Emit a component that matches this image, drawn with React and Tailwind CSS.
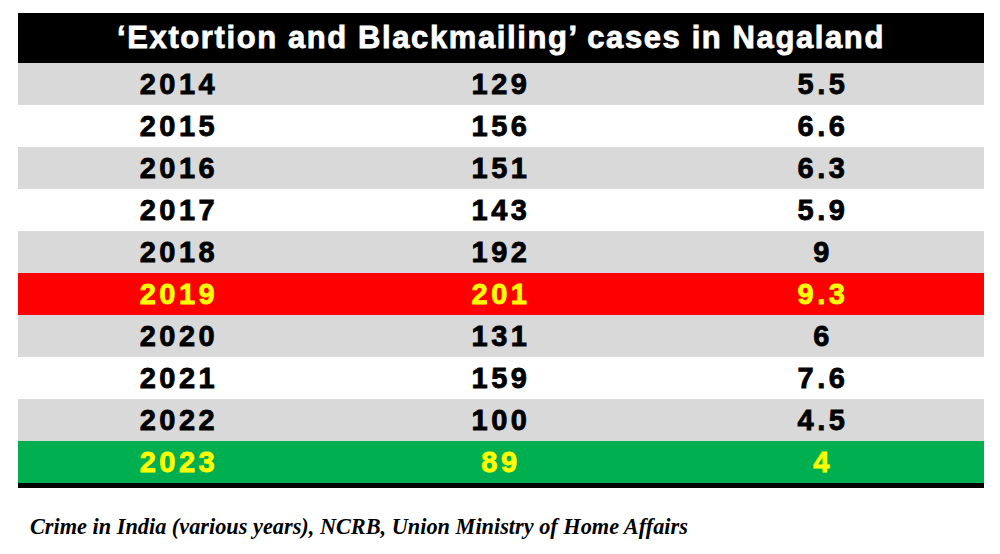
import React from "react";

const rows = [
  { year: "2014", cases: "129", rate: "5.5", tone: "gray" },
  { year: "2015", cases: "156", rate: "6.6", tone: "white" },
  { year: "2016", cases: "151", rate: "6.3", tone: "gray" },
  { year: "2017", cases: "143", rate: "5.9", tone: "white" },
  { year: "2018", cases: "192", rate: "9", tone: "gray" },
  { year: "2019", cases: "201", rate: "9.3", tone: "red" },
  { year: "2020", cases: "131", rate: "6", tone: "gray" },
  { year: "2021", cases: "159", rate: "7.6", tone: "white" },
  { year: "2022", cases: "100", rate: "4.5", tone: "gray" },
  { year: "2023", cases: "89", rate: "4", tone: "green" },
];

const tones = {
  gray: "bg-[#d9d9d9] text-black",
  white: "bg-white text-black",
  red: "bg-[#ff0000] text-[#ffff00]",
  green: "bg-[#00b050] text-[#ffff00]",
};

export default function App() {
  return (
    <div className="w-[1000px] h-[554px] bg-white pt-[13px] px-[18px]">
      <div className="w-[966px] border-b-[5px] border-black font-['Liberation_Sans',Arial,sans-serif] font-bold">
        <div className="h-[50px] bg-black text-white flex items-center justify-center text-[31px] tracking-[1.6px] [-webkit-text-stroke:0.8px]">
          ‘Extortion and Blackmailing’ cases in Nagaland
        </div>
        {rows.map((r) => (
          <div
            key={r.year}
            className={`h-[42px] grid grid-cols-3 items-center text-center text-[29px] tracking-[3.5px] [-webkit-text-stroke:0.8px] ${tones[r.tone]}`}
          >
            <span>{r.year}</span>
            <span>{r.cases}</span>
            <span>{r.rate}</span>
          </div>
        ))}
      </div>
      <p className="mt-[22px] ml-[12px] text-[22.3px] font-bold italic text-black font-['Liberation_Serif','Times_New_Roman',serif]">
        Crime in India (various years), NCRB, Union Ministry of Home Affairs
      </p>
    </div>
  );
}
